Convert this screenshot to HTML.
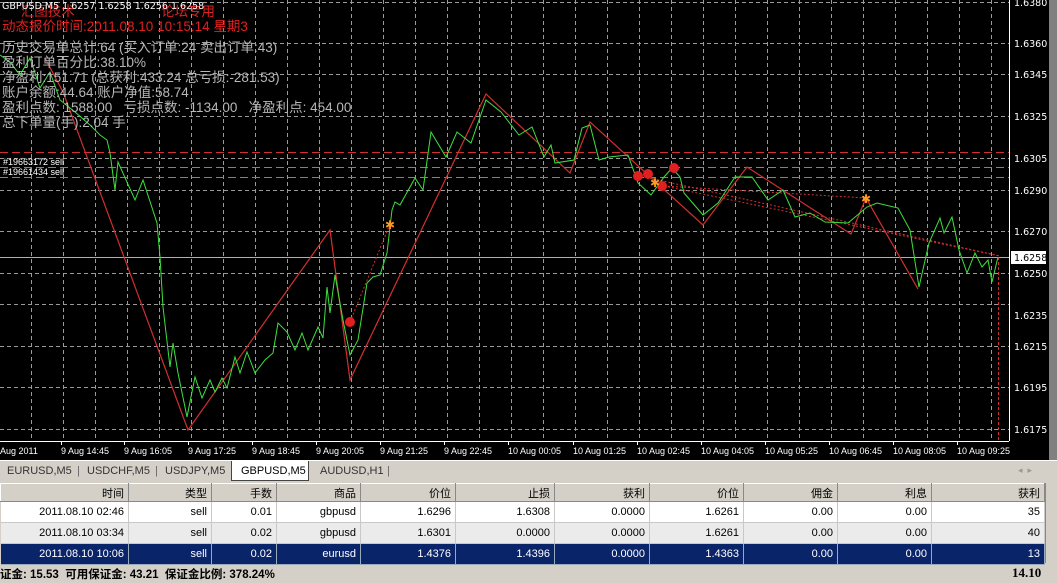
<!DOCTYPE html><html><head><meta charset="utf-8"><style>
*{margin:0;padding:0;box-sizing:border-box}
body{width:1057px;height:583px;overflow:hidden;background:#d4d0c8;font-family:Tahoma,"Liberation Sans","Noto Sans CJK SC",sans-serif;position:relative}
#chart{position:absolute;left:0;top:0;width:1057px;height:460px;background:#000}
.tl{position:absolute;left:2px;font-size:13.5px;white-space:nowrap;font-family:"Liberation Sans","Noto Sans CJK SC",sans-serif}
#tabs{position:absolute;top:460px;left:0;width:1057px;height:22px;background:#d4d0c8;border-top:1px solid #fff;font-size:11px;color:#333}
#tabs span{position:absolute;top:4px}
table{position:absolute;top:483px;left:0;width:1045px;border-collapse:collapse;font-size:11px;font-family:Tahoma,"Liberation Sans","Noto Sans CJK SC",sans-serif}
td{height:21px;text-align:right;padding-right:4px;border-right:1px solid #c8c8c8;border-bottom:1px solid #c8c8c8}
th{height:18px;font-weight:normal;text-align:right;padding-right:4px;background:#d4d0c8;border:1px solid #888;border-top-color:#fff;border-left-color:#fff}
tr.a td{background:#fff}tr.b td{background:#ebebeb}tr.c td{background:#0a246a;color:#fff;border-color:#9ab}
#foot{position:absolute;top:563px;left:0;width:1057px;height:20px;font-weight:bold;font-size:11.5px}
</style></head><body>
<div id="chart">
<svg width="1057" height="460" style="position:absolute;left:0;top:0">
<g stroke="#9a9a9a" stroke-dasharray="4,3" stroke-width="1">
<line x1="0" x2="1009" y1="2.5" y2="2.5"/><line x1="0" x2="1009" y1="43.5" y2="43.5"/><line x1="0" x2="1009" y1="74.5" y2="74.5"/><line x1="0" x2="1009" y1="116.5" y2="116.5"/><line x1="0" x2="1009" y1="158.5" y2="158.5"/><line x1="0" x2="1009" y1="190.5" y2="190.5"/><line x1="0" x2="1009" y1="231.5" y2="231.5"/><line x1="0" x2="1009" y1="273.5" y2="273.5"/><line x1="0" x2="1009" y1="304.5" y2="304.5"/><line x1="0" x2="1009" y1="346.5" y2="346.5"/><line x1="0" x2="1009" y1="387.5" y2="387.5"/><line x1="0" x2="1009" y1="429.5" y2="429.5"/>
</g>
<g stroke="#9a9a9a" stroke-dasharray="4,3">
<line x1="31.5" x2="31.5" y1="0" y2="441"/><line x1="63.5" x2="63.5" y1="0" y2="441"/><line x1="95.5" x2="95.5" y1="0" y2="441"/><line x1="127.5" x2="127.5" y1="0" y2="441"/><line x1="159.5" x2="159.5" y1="0" y2="441"/><line x1="191.5" x2="191.5" y1="0" y2="441"/><line x1="223.5" x2="223.5" y1="0" y2="441"/><line x1="255.5" x2="255.5" y1="0" y2="441"/><line x1="287.5" x2="287.5" y1="0" y2="441"/><line x1="319.5" x2="319.5" y1="0" y2="441"/><line x1="351.5" x2="351.5" y1="0" y2="441"/><line x1="383.5" x2="383.5" y1="0" y2="441"/><line x1="415.5" x2="415.5" y1="0" y2="441"/><line x1="447.5" x2="447.5" y1="0" y2="441"/><line x1="479.5" x2="479.5" y1="0" y2="441"/><line x1="511.5" x2="511.5" y1="0" y2="441"/><line x1="543.5" x2="543.5" y1="0" y2="441"/><line x1="575.5" x2="575.5" y1="0" y2="441"/><line x1="607.5" x2="607.5" y1="0" y2="441"/><line x1="639.5" x2="639.5" y1="0" y2="441"/><line x1="671.5" x2="671.5" y1="0" y2="441"/><line x1="703.5" x2="703.5" y1="0" y2="441"/><line x1="735.5" x2="735.5" y1="0" y2="441"/><line x1="767.5" x2="767.5" y1="0" y2="441"/><line x1="799.5" x2="799.5" y1="0" y2="441"/><line x1="831.5" x2="831.5" y1="0" y2="441"/><line x1="863.5" x2="863.5" y1="0" y2="441"/><line x1="895.5" x2="895.5" y1="0" y2="441"/><line x1="927.5" x2="927.5" y1="0" y2="441"/><line x1="959.5" x2="959.5" y1="0" y2="441"/><line x1="991.5" x2="991.5" y1="0" y2="441"/>
</g>
<line x1="0" x2="1009" y1="152.5" y2="152.5" stroke="#d03030" stroke-dasharray="8,4"/>
<line x1="0" x2="1009" y1="167.5" y2="167.5" stroke="#40b040" stroke-dasharray="8,4"/>
<line x1="0" x2="1009" y1="177.5" y2="177.5" stroke="#40b040" stroke-dasharray="8,4"/>
<line x1="0" x2="1009" y1="257.5" y2="257.5" stroke="#b0b0b0"/>
<line x1="998.5" x2="998.5" y1="257" y2="441" stroke="#d03030" stroke-dasharray="3,2"/>
<g stroke="#d03030" stroke-dasharray="2,2" fill="none">
<line x1="645" y1="177" x2="1000" y2="256"/><line x1="664" y1="186" x2="1000" y2="256"/><line x1="664" y1="186" x2="866" y2="198"/><line x1="350" y1="322" x2="390" y2="224"/>
</g>
<polyline fill="none" stroke="#d03030" stroke-width="1.2" points="45,58 63,92 188,430 330,230 350,380 486,94 570,173 590,122 703,225 747,167 851,234 866,198 918,289"/>
<polyline fill="none" stroke="#3ee03e" stroke-width="1" points="0,55 10,62 20,75 30,58 40,88 50,72 60,100 75,112 90,125 100,135 107,140 110,153 115,190 118,162 135,200 143,180 157,223 160,257 163,307 170,367 173,343 178,373 187,417 195,377 202,398 210,380 215,392 222,378 227,388 235,357 240,373 247,352 255,373 265,360 273,353 278,323 287,332 295,350 302,333 308,350 318,327 323,338 327,287 330,313 335,275 343,320 350,355 358,340 367,283 373,277 380,275 387,253 392,210 395,202 400,205 415,178 423,190 431,132 446,157 457,132 471,143 486,100 501,112 519,135 532,127 544,157 551,145 555,163 574,160 582,128 590,125 599,160 609,157 628,155 638,183 651,195 664,177 672,168 680,177 684,193 703,215 718,203 735,177 752,177 768,200 783,190 795,217 810,213 825,222 848,223 867,207 877,203 898,208 910,230 919,287 929,243 940,218 944,233 952,217 959,250 967,273 975,253 982,267 988,260 992,282 998,257"/>
<g fill="#e02020"><circle cx="350" cy="322" r="5"/><circle cx="638" cy="176" r="5"/><circle cx="648" cy="174" r="5"/><circle cx="662" cy="186" r="5"/><circle cx="674" cy="168" r="5"/></g>
<g fill="#ff9a20" font-size="12" font-family="DejaVu Sans"><text x="385" y="229">✱</text><text x="650" y="187">✱</text><text x="861" y="203">✱</text></g>
<line x1="1009.5" x2="1009.5" y1="0" y2="441" stroke="#fff"/>
<line x1="0" x2="1009" y1="441.5" y2="441.5" stroke="#fff"/>
<rect x="1049" y="0" width="8" height="460" fill="#808080"/>
<g fill="#fff" font-size="9.5" font-family="Tahoma,'DejaVu Sans',sans-serif">
<text x="1014" y="6">1.6380</text><text x="1014" y="47">1.6360</text><text x="1014" y="78">1.6345</text><text x="1014" y="120">1.6325</text><text x="1014" y="162">1.6305</text><text x="1014" y="194">1.6290</text><text x="1014" y="235">1.6270</text><text x="1014" y="277">1.6250</text><text x="1014" y="319">1.6235</text><text x="1014" y="350">1.6215</text><text x="1014" y="391">1.6195</text><text x="1014" y="433">1.6175</text>
</g>
<rect x="1011" y="251" width="35" height="13" fill="#fff"/><text x="1014" y="261" font-size="9.5" font-family="Tahoma,'DejaVu Sans',sans-serif">1.6258</text>
<g fill="#fff" font-size="9" font-family="'Liberation Sans',sans-serif">
<text x="0" y="454">Aug 2011</text><text x="61" y="454">9 Aug 14:45</text><text x="124" y="454">9 Aug 16:05</text><text x="188" y="454">9 Aug 17:25</text><text x="252" y="454">9 Aug 18:45</text><text x="316" y="454">9 Aug 20:05</text><text x="380" y="454">9 Aug 21:25</text><text x="444" y="454">9 Aug 22:45</text><text x="508" y="454">10 Aug 00:05</text><text x="573" y="454">10 Aug 01:25</text><text x="637" y="454">10 Aug 02:45</text><text x="701" y="454">10 Aug 04:05</text><text x="765" y="454">10 Aug 05:25</text><text x="829" y="454">10 Aug 06:45</text><text x="893" y="454">10 Aug 08:05</text><text x="957" y="454">10 Aug 09:25</text>
<text x="3" y="165">#19663172 sell</text><text x="3" y="175">#19661434 sell</text>
</g>
<g stroke="#fff"><line x1="61.5" x2="61.5" y1="441" y2="445"/><line x1="124.5" x2="124.5" y1="441" y2="445"/><line x1="188.5" x2="188.5" y1="441" y2="445"/><line x1="252.5" x2="252.5" y1="441" y2="445"/><line x1="316.5" x2="316.5" y1="441" y2="445"/><line x1="380.5" x2="380.5" y1="441" y2="445"/><line x1="444.5" x2="444.5" y1="441" y2="445"/><line x1="508.5" x2="508.5" y1="441" y2="445"/><line x1="573.5" x2="573.5" y1="441" y2="445"/><line x1="637.5" x2="637.5" y1="441" y2="445"/><line x1="701.5" x2="701.5" y1="441" y2="445"/><line x1="765.5" x2="765.5" y1="441" y2="445"/><line x1="829.5" x2="829.5" y1="441" y2="445"/><line x1="893.5" x2="893.5" y1="441" y2="445"/><line x1="957.5" x2="957.5" y1="441" y2="445"/></g>
</svg>
<div class="tl" style="top:0;color:#e02020">&nbsp;&nbsp;&nbsp;&nbsp;&nbsp;汇图技术&nbsp;&nbsp;&nbsp;&nbsp;&nbsp;&nbsp;&nbsp;&nbsp;&nbsp;&nbsp;&nbsp;&nbsp;&nbsp;&nbsp;&nbsp;&nbsp;&nbsp;&nbsp;&nbsp;&nbsp;&nbsp;&nbsp;&nbsp;论坛专用</div>
<div class="tl" style="top:1px;color:#fff;font-size:9.5px;font-family:Tahoma,'DejaVu Sans',sans-serif">GBPUSD,M5 1.6257 1.6258 1.6256 1.6258</div>
<div class="tl" style="top:15px;color:#e02020">动态报价时间:2011.08.10 10:15:14 星期3</div>
<div class="tl" style="top:36px;color:#b8b8b8">历史交易单总计:64 (买入订单:24 卖出订单:43)</div>
<div class="tl" style="top:51px;color:#b8b8b8">盈利订单百分比:38.10%</div>
<div class="tl" style="top:66px;color:#b8b8b8">净盈利:151.71 (总获利:433.24 总亏损:-281.53)</div>
<div class="tl" style="top:81px;color:#b8b8b8">账户余额:44.64 账户净值:58.74</div>
<div class="tl" style="top:96px;color:#b8b8b8">盈利点数: 1588.00&nbsp;&nbsp;&nbsp;亏损点数: -1134.00&nbsp;&nbsp;&nbsp;净盈利点: 454.00</div>
<div class="tl" style="top:111px;color:#b8b8b8">总下单量(手):2.04 手</div>
</div>
<div id="tabs">
<span style="left:7px">EURUSD,M5</span><span style="left:77px;color:#666">|</span>
<span style="left:87px">USDCHF,M5</span><span style="left:155px;color:#666">|</span>
<span style="left:165px">USDJPY,M5</span>
<div style="position:absolute;left:231px;top:0;width:78px;height:20px;background:#fff;border:1px solid #444;border-top:none"></div>
<span style="left:241px;color:#000">GBPUSD,M5</span>
<span style="left:320px">AUDUSD,H1</span><span style="left:387px;color:#666">|</span>
<span style="left:1018px;color:#999;font-size:9px">◂&nbsp;&nbsp;▸</span>
</div>
<table>
<tr><th style="width:128px">时间</th><th style="width:83px">类型</th><th style="width:65px">手数</th><th style="width:84px">商品</th><th style="width:95px">价位</th><th style="width:99px">止损</th><th style="width:95px">获利</th><th style="width:94px">价位</th><th style="width:94px">佣金</th><th style="width:94px">利息</th><th>获利</th></tr>
<tr class="a"><td>2011.08.10 02:46</td><td>sell</td><td>0.01</td><td>gbpusd</td><td>1.6296</td><td>1.6308</td><td>0.0000</td><td>1.6261</td><td>0.00</td><td>0.00</td><td>35</td></tr>
<tr class="b"><td>2011.08.10 03:34</td><td>sell</td><td>0.02</td><td>gbpusd</td><td>1.6301</td><td>0.0000</td><td>0.0000</td><td>1.6261</td><td>0.00</td><td>0.00</td><td>40</td></tr>
<tr class="c"><td>2011.08.10 10:06</td><td>sell</td><td>0.02</td><td>eurusd</td><td>1.4376</td><td>1.4396</td><td>0.0000</td><td>1.4363</td><td>0.00</td><td>0.00</td><td>13</td></tr>
</table>
<div style="position:absolute;left:1045px;top:483px;width:12px;height:80px;background:#d4d0c8;border-left:1px solid #888"></div>
<div id="foot"><span style="position:absolute;left:0;top:3px">证金: 15.53&nbsp;&nbsp;可用保证金: 43.21&nbsp;&nbsp;保证金比例: 378.24%</span><span style="position:absolute;left:1012px;top:2px;font-family:'Liberation Serif',serif;font-size:13px">14.10</span></div>
</body></html>
